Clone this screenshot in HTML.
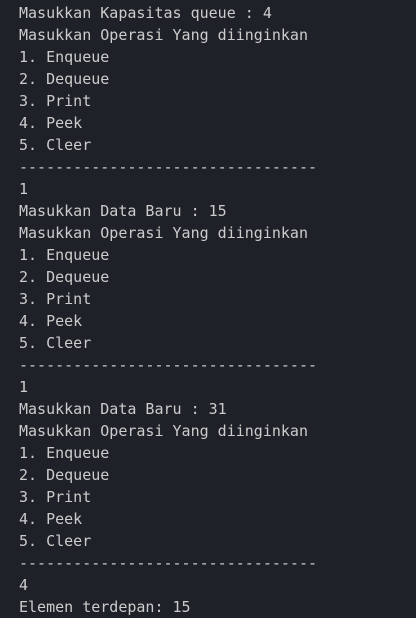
<!DOCTYPE html>
<html><head><style>
html,body{margin:0;padding:0;background:#1e2228;width:416px;height:618px;overflow:hidden}
pre{margin:0;position:absolute;left:19px;top:2px;font-family:"DejaVu Sans Mono","Liberation Mono",monospace;font-size:15px;line-height:22px;color:#cccccc}
</style></head><body><pre>Masukkan Kapasitas queue : 4
Masukkan Operasi Yang diinginkan
1. Enqueue
2. Dequeue
3. Print
4. Peek
5. Cleer
---------------------------------
1
Masukkan Data Baru : 15
Masukkan Operasi Yang diinginkan
1. Enqueue
2. Dequeue
3. Print
4. Peek
5. Cleer
---------------------------------
1
Masukkan Data Baru : 31
Masukkan Operasi Yang diinginkan
1. Enqueue
2. Dequeue
3. Print
4. Peek
5. Cleer
---------------------------------
4
Elemen terdepan: 15</pre></body></html>
